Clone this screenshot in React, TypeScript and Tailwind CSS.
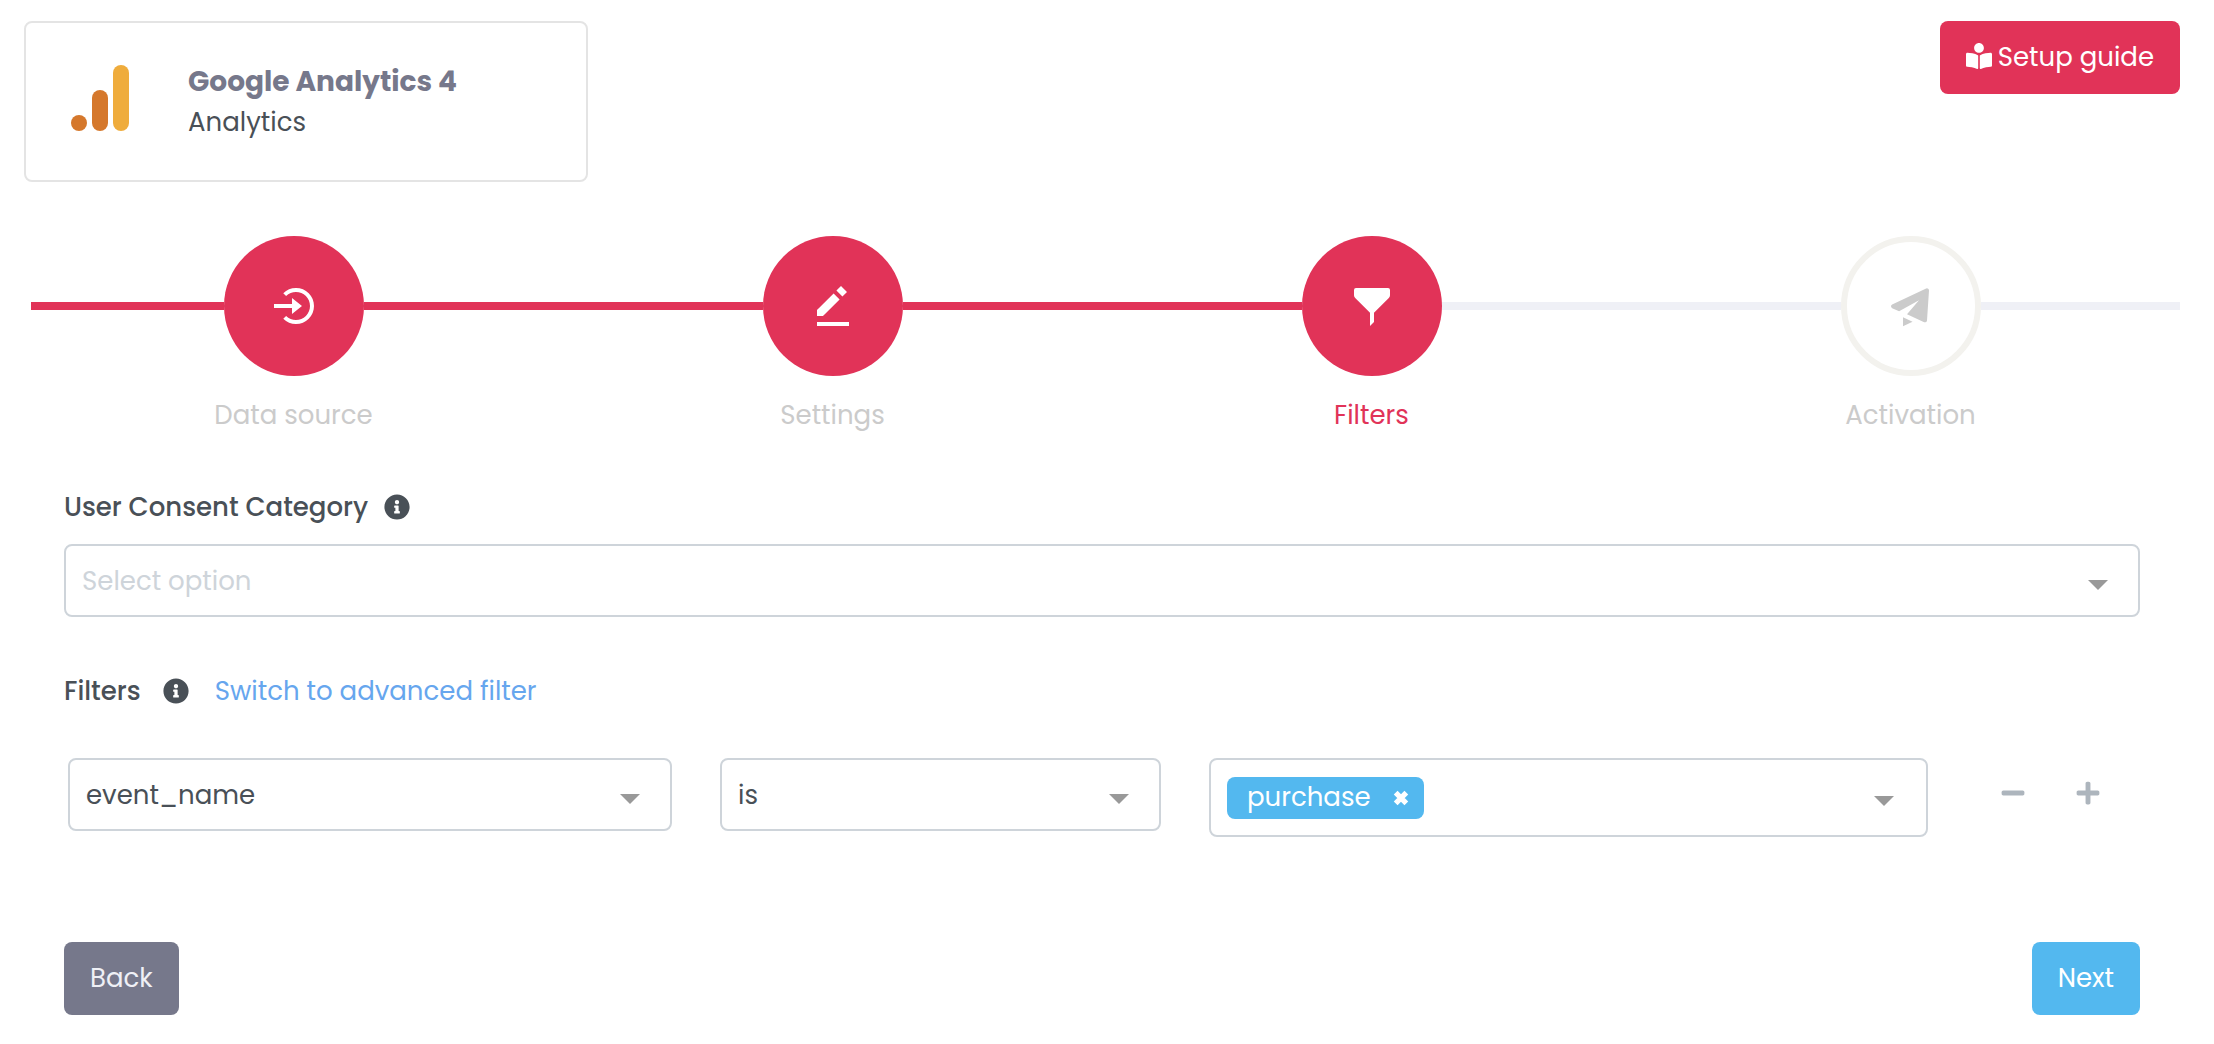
import { useState } from 'react'
import type { ComponentProps } from 'react'
import { FaBookReader, FaInfoCircle, FaMinus, FaPlus } from 'react-icons/fa'
import { BiLogInCircle, BiSolidEditAlt, BiSolidFilterAlt, BiSolidPaperPlane } from 'react-icons/bi'
import clsx from 'clsx'

const steps = [
  { label: 'Data source', icon: BiLogInCircle },
  { label: 'Settings', icon: BiSolidEditAlt },
  { label: 'Filters', icon: BiSolidFilterAlt },
  { label: 'Activation', icon: BiSolidPaperPlane },
]

const CURRENT_STEP = 2

function AnalyticsLogo() {
  return (
    <svg width="58" height="66" viewBox="0 0 58 66" className="mb-2 shrink-0" aria-hidden="true">
      <rect x="42" width="16" height="66" rx="8" fill="#efac3c" />
      <rect x="21" y="25" width="16" height="41" rx="8" fill="#d5782c" />
      <circle cx="8" cy="58" r="8" fill="#d5782c" />
    </svg>
  )
}

function Caret() {
  return (
    <svg
      width="20"
      height="10"
      viewBox="0 0 20 10"
      className="pointer-events-none absolute right-8 top-9"
      aria-hidden="true"
    >
      <path d="M0 0h20L10 10z" fill="#999" />
    </svg>
  )
}

function Select({ className, children, ...props }: ComponentProps<'select'>) {
  return (
    <div className="relative">
      <select
        className={clsx(
          'block h-[73px] w-full appearance-none rounded-lg border-2 border-[#ced4da] bg-white pl-4 pr-16 pt-0.5',
          className,
        )}
        {...props}
      >
        {children}
      </select>
      <Caret />
    </div>
  )
}

function InfoButton({ label }: { label: string }) {
  return (
    <button type="button" aria-label={label} className="text-[#495057]">
      <FaInfoCircle className="size-[26px]" />
    </button>
  )
}

function Stepper() {
  return (
    <ol className="grid grid-cols-4 pt-[54px]">
      {steps.map(({ label, icon: Icon }, i) => {
        const reached = i <= CURRENT_STEP
        return (
          <li key={label} className="flex flex-col items-center">
            <div className="grid w-full grid-cols-[1fr_140px_1fr] items-center">
              <span className={clsx('h-2', i === 0 && 'ml-[7px]', reached ? 'bg-[#e13358]' : 'bg-[#eff0f6]')} />
              <span
                className={clsx(
                  'flex size-[140px] items-center justify-center rounded-full',
                  reached ? 'bg-[#e13358] text-white' : 'border-6 border-[#f3f2ee] text-[#cbcbcb]',
                )}
              >
                <Icon className="size-12" />
              </span>
              <span className={clsx('h-2', i < CURRENT_STEP ? 'bg-[#e13358]' : 'bg-[#eff0f6]')} />
            </div>
            <span className={clsx('mt-[19px] leading-10', i === CURRENT_STEP ? 'text-[#e13358]' : 'text-[#cbcbcb]')}>
              {label}
            </span>
          </li>
        )
      })}
    </ol>
  )
}

export default function App() {
  const [tags, setTags] = useState(['purchase'])

  return (
    <main className="bg-white pb-7 pl-6 pr-[34px] pt-[21px] font-['Poppins','Inter',sans-serif] text-[26px] text-[#495057]">
      <header className="flex items-start justify-between">
        <div className="flex h-[161px] w-[564px] items-center rounded-lg border-2 border-[#e4e4e4] pl-[45px]">
          <AnalyticsLogo />
          <div className="ml-[59px] leading-10">
            <h1 className="text-[28px] font-bold text-[#76788b]">Google Analytics 4</h1>
            <p>Analytics</p>
          </div>
        </div>
        <button
          type="button"
          className="flex h-[73px] items-center gap-1.5 rounded-lg bg-[#e13358] px-[26px] text-white"
        >
          <FaBookReader className="mb-1 size-[26px]" />
          Setup guide
        </button>
      </header>

      <Stepper />

      <form className="pl-10 pr-10 pt-[52px]" onSubmit={(e) => e.preventDefault()}>
        {/* Consent */}
        <div className="flex items-center gap-4 leading-10">
          <label htmlFor="consent" className="font-medium">
            User Consent Category
          </label>
          <InfoButton label="About user consent category" />
        </div>
        <div className="mt-[17px]">
          <Select id="consent" defaultValue="" className="text-[#ced4da]">
            <option value="">Select option</option>
            <option value="analytics">Analytics</option>
          </Select>
        </div>

        {/* Filters */}
        <div className="mt-[54px] flex items-center leading-10">
          <h2 className="mr-[22px] font-medium">Filters</h2>
          <InfoButton label="About filters" />
          <a href="#advanced" className="ml-[26px] text-[#66a6ee]">
            Switch to advanced filter
          </a>
        </div>
        <div className="ml-1 mt-[47px] grid grid-cols-[minmax(0,604fr)_minmax(0,441fr)_minmax(0,719fr)_minmax(0,164fr)] items-start gap-12">
          <Select aria-label="Field" defaultValue="event_name">
            <option>event_name</option>
          </Select>
          <Select aria-label="Operator" defaultValue="is">
            <option>is</option>
          </Select>
          <div className="relative flex h-[79px] items-center rounded-lg border-2 border-[#ced4da] pl-4 pr-16">
            {tags.map((tag) => (
              <span
                key={tag}
                className="flex h-[42px] items-center gap-[22px] rounded-lg bg-[#53b8ef] pl-5 pr-[15px] text-white"
              >
                {tag}
                <button
                  type="button"
                  aria-label={`Remove ${tag}`}
                  onClick={() => setTags(tags.filter((t) => t !== tag))}
                >
                  <svg width="16" height="16" viewBox="0 0 15 15" aria-hidden="true">
                    <path d="M2.5 2.5l10 10M12.5 2.5l-10 10" stroke="currentColor" strokeWidth="5" />
                  </svg>
                </button>
              </span>
            ))}
            <input aria-label="Values" className="ml-2 min-w-0 flex-1 outline-none" />
            <Caret />
          </div>
          <div className="flex h-[69px] items-center gap-[49px] pl-6 text-[#adb5bd]">
            <button type="button" aria-label="Remove filter">
              <FaMinus className="size-[26px]" />
            </button>
            <button type="button" aria-label="Add filter">
              <FaPlus className="size-[26px]" />
            </button>
          </div>
        </div>

        <div className="mt-[105px] flex justify-between">
          <button type="button" className="h-[73px] rounded-lg bg-[#76788b] px-[26px] text-[#eff0f6]">
            Back
          </button>
          <button type="submit" className="h-[73px] rounded-lg bg-[#53b8ef] px-[26px] text-white">
            Next
          </button>
        </div>
      </form>
    </main>
  )
}
